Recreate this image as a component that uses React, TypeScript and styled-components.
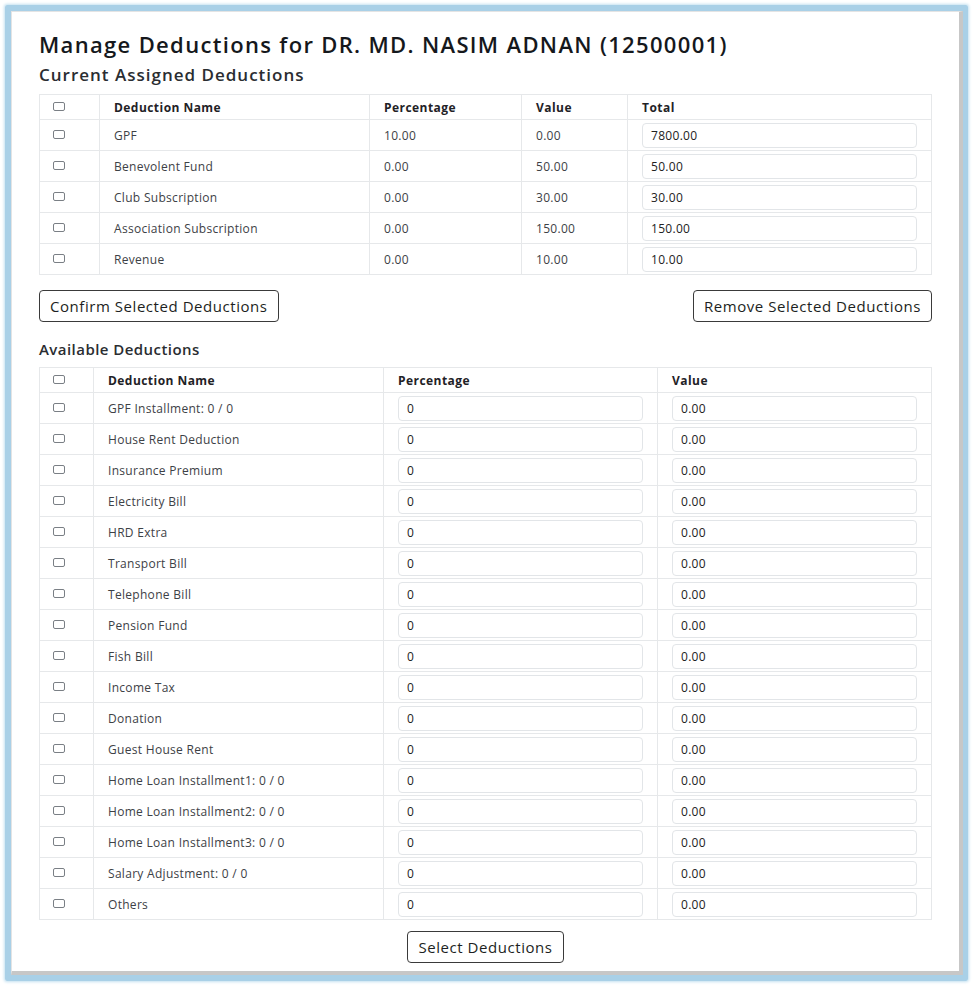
import React from "react";
import styled, { createGlobalStyle } from "styled-components";

const GlobalStyle = createGlobalStyle`
  html, body { margin: 0; padding: 0; background: #ffffff; }
  body { font-family: "Open Sans", "Noto Sans", sans-serif; color: #212529; }
  * { box-sizing: border-box; }
`;

const Frame = styled.div`
  margin: 5px;
  width: 963px;
  height: 976px;
  border: 6px solid #a9d0e7;
  border-radius: 2px;
  box-shadow: 0 0 3px 1px #c3e0f0;
  display: flex;
`;

const Card = styled.div`
  flex: 1;
  background: #ffffff;
  border-top: 1px solid #e4e4e4;
  border-left: 1px solid #e4e4e4;
  border-right: 4px solid #c7c7c7;
  border-bottom: 4px solid #c7c7c7;
  padding: 20px 27px 0 27px;
  display: flex;
  flex-direction: column;
`;

const Title = styled.h1`
  margin: 0;
  font-size: 22px;
  line-height: 25px;
  font-weight: 600;
  color: #15181c;
  letter-spacing: 1.33px;
  white-space: nowrap;
`;

const SectionTitle = styled.h2<{ $small?: boolean }>`
  margin: ${(p) => (p.$small ? "17px" : "7px")} 0 0 0;
  font-size: ${(p) => (p.$small ? 15 : 17)}px;
  line-height: ${(p) => (p.$small ? 20 : 22)}px;
  letter-spacing: ${(p) => (p.$small ? 0.45 : 1)}px;
  font-weight: 600;
  color: #2a2d31;
  white-space: nowrap;
`;

const Table = styled.table`
  margin-top: 8px;
  width: 892px;
  border-collapse: collapse;
  table-layout: fixed;
  font-size: 12px;
  letter-spacing: 0.3px;
`;

const HeadRow = styled.tr`
  height: 25px;
`;

const BodyRow = styled.tr`
  height: 31px;
`;

const Th = styled.th`
  border: 1px solid #e6e8ea;
  text-align: left;
  font-weight: 700;
  letter-spacing: 0.45px;
  color: #1f2226;
  padding: 0 14px;
  vertical-align: middle;
  white-space: nowrap;
`;

const Td = styled.td`
  border: 1px solid #e6e8ea;
  color: #3d4146;
  padding: 0 14px;
  vertical-align: middle;
  white-space: nowrap;
`;

const Box = styled.span`
  display: inline-block;
  width: 12px;
  height: 9px;
  border: 1px solid #7a7f85;
  border-radius: 2px;
  vertical-align: middle;
  margin-top: -3px;
  margin-left: -1px;
`;

const Field = styled.div`
  height: 25px;
  border: 1px solid #e2e5e8;
  border-radius: 4px;
  padding: 0 8px;
  display: flex;
  align-items: center;
  color: #222;
`;

const ButtonRow = styled.div`
  display: flex;
  justify-content: space-between;
  margin-top: 15px;
`;

const Button = styled.button`
  height: 32px;
  padding: 0 10px;
  border: 1px solid #3a3a3a;
  border-radius: 4px;
  background: #ffffff;
  font-family: "Open Sans", "Noto Sans", sans-serif;
  font-size: 15px;
  letter-spacing: 0.55px;
  color: #1d1f22;
  cursor: pointer;
  white-space: nowrap;
`;

const Center = styled.div`
  display: flex;
  justify-content: center;
  margin-top: 11px;
`;

const assigned = [
  ["GPF", "10.00", "0.00", "7800.00"],
  ["Benevolent Fund", "0.00", "50.00", "50.00"],
  ["Club Subscription", "0.00", "30.00", "30.00"],
  ["Association Subscription", "0.00", "150.00", "150.00"],
  ["Revenue", "0.00", "10.00", "10.00"],
];

const available = [
  "GPF Installment: 0 / 0",
  "House Rent Deduction",
  "Insurance Premium",
  "Electricity Bill",
  "HRD Extra",
  "Transport Bill",
  "Telephone Bill",
  "Pension Fund",
  "Fish Bill",
  "Income Tax",
  "Donation",
  "Guest House Rent",
  "Home Loan Installment1: 0 / 0",
  "Home Loan Installment2: 0 / 0",
  "Home Loan Installment3: 0 / 0",
  "Salary Adjustment: 0 / 0",
  "Others",
];

export default function App() {
  return (
    <>
      <GlobalStyle />
      <Frame>
        <Card>
          <Title>Manage Deductions for DR. MD. NASIM ADNAN (12500001)</Title>
          <SectionTitle>Current Assigned Deductions</SectionTitle>
          <Table>
            <colgroup>
              <col style={{ width: 60 }} />
              <col style={{ width: 270 }} />
              <col style={{ width: 152 }} />
              <col style={{ width: 106 }} />
              <col style={{ width: 304 }} />
            </colgroup>
            <thead>
              <HeadRow>
                <Th><Box /></Th>
                <Th>Deduction Name</Th>
                <Th>Percentage</Th>
                <Th>Value</Th>
                <Th>Total</Th>
              </HeadRow>
            </thead>
            <tbody>
              {assigned.map((r) => (
                <BodyRow key={r[0]}>
                  <Td><Box /></Td>
                  <Td>{r[0]}</Td>
                  <Td>{r[1]}</Td>
                  <Td>{r[2]}</Td>
                  <Td><Field>{r[3]}</Field></Td>
                </BodyRow>
              ))}
            </tbody>
          </Table>
          <ButtonRow>
            <Button>Confirm Selected Deductions</Button>
            <Button>Remove Selected Deductions</Button>
          </ButtonRow>
          <SectionTitle $small>Available Deductions</SectionTitle>
          <Table>
            <colgroup>
              <col style={{ width: 54 }} />
              <col style={{ width: 290 }} />
              <col style={{ width: 274 }} />
              <col style={{ width: 274 }} />
            </colgroup>
            <thead>
              <HeadRow>
                <Th><Box /></Th>
                <Th>Deduction Name</Th>
                <Th>Percentage</Th>
                <Th>Value</Th>
              </HeadRow>
            </thead>
            <tbody>
              {available.map((n) => (
                <BodyRow key={n}>
                  <Td><Box /></Td>
                  <Td>{n}</Td>
                  <Td><Field>0</Field></Td>
                  <Td><Field>0.00</Field></Td>
                </BodyRow>
              ))}
            </tbody>
          </Table>
          <Center>
            <Button>Select Deductions</Button>
          </Center>
        </Card>
      </Frame>
    </>
  );
}
